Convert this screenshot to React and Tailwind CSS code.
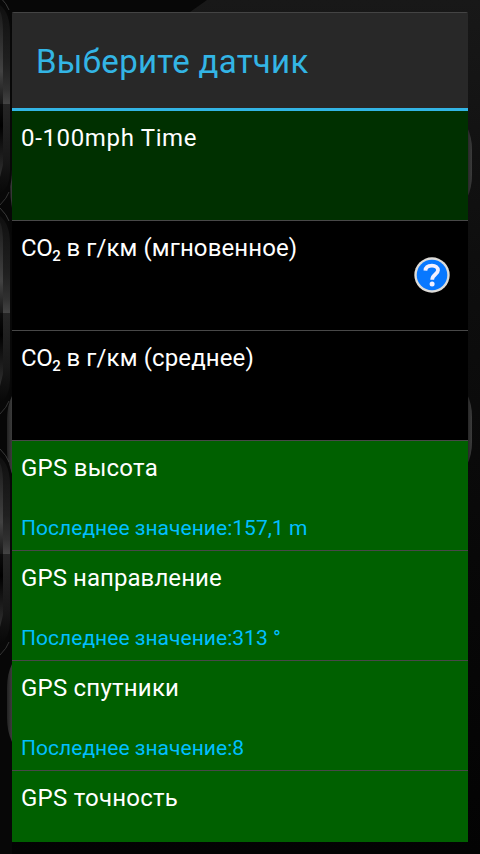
const sensors = [
  { name: "0-100mph Time", bg: "bg-[#003000]", tracking: "tracking-[0.65px]" },
  { co2: true, name: " в г/км (мгновенное)", bg: "bg-black", tracking: "tracking-[0.1px]", help: true },
  { co2: true, name: " в г/км (среднее)", bg: "bg-black", tracking: "tracking-[0.12px]" },
  { name: "GPS высота", bg: "bg-[#006000]", tracking: "tracking-[0.25px]", value: "157,1 m" },
  { name: "GPS направление", bg: "bg-[#006000]", tracking: "tracking-[0.07px]", value: "313 °" },
  { name: "GPS спутники", bg: "bg-[#006000]", tracking: "tracking-[0.22px]", value: "8" },
  { name: "GPS точность", bg: "bg-[#006000]", tracking: "tracking-[0.25px]" }
];

const HelpIcon = () => (
  <svg width="36" height="36" viewBox="0 0 36 36" className="-mt-0.5 shrink-0">
    <circle cx="18" cy="18" r="17.7" fill="#dedcd8" />
    <circle cx="18" cy="18" r="15.3" fill="#0878ff" />
    <path d="M11.4 13.6C11.6 10 14.4 8.6 18 8.6C21.6 8.6 24 10.6 24 13.3C24 17.3 18.2 17.4 18.2 22.8"
      fill="none" stroke="#f4f0ff" strokeWidth="3.8" />
    <circle cx="18.1" cy="27" r="2.5" fill="#f4f0ff" />
  </svg>
);

// edge of one gauge frame, poking out on the left
const LeftGauge = ({ top, split, bottom }) => (
  <g>
    <path d={`M0 ${top} Q12 ${top + 12} 12 ${top + 36} V${bottom - 36} Q12 ${bottom - 12} 0 ${bottom}Z`} fill="#080808" />
    <path d={`M0 ${top} Q7 ${top + 7} 9 ${top + 13}`} fill="none" stroke="#484848" strokeWidth="0.8" />
    <path d={`M0 ${bottom} Q7 ${bottom - 7} 9 ${bottom - 13}`} fill="none" stroke="#404040" strokeWidth="0.8" />
    <path d={`M0 ${top + 8} Q10 ${top + 16} 10 ${top + 36} V${split} H0Z`} fill="url(#shine)" />
    <path d={`M0 ${split} H10 V${bottom - 34} Q10 ${bottom - 18} 0 ${bottom - 10}Z`} fill="url(#shade)" />
    <path d={`M0 ${top + 14} Q3 ${top + 20} 3 ${top + 36} V${split} H0Z`} fill="url(#glass)" />
    <path d={`M0 ${split} H3 V${bottom - 40} L0 ${bottom - 28}Z`} fill="url(#glassLow)" />
  </g>
);

const Backdrop = () => (
  <svg className="absolute inset-0" width="480" height="854" viewBox="0 0 480 854">
    <defs>
      <linearGradient id="page" x1="0" y1="0" x2="0" y2="1">
        <stop offset="0" stopColor="#181818" />
        <stop offset="0.3" stopColor="#0e0e0e" />
        <stop offset="0.65" stopColor="#080808" />
        <stop offset="1" stopColor="#030303" />
      </linearGradient>
      <linearGradient id="shine" x1="0" y1="0" x2="0" y2="1">
        <stop offset="0" stopColor="#101010" />
        <stop offset="0.6" stopColor="#202020" />
        <stop offset="0.85" stopColor="#303030" />
        <stop offset="1" stopColor="#444" />
      </linearGradient>
      <linearGradient id="shade" x1="0" y1="0" x2="0" y2="1">
        <stop offset="0" stopColor="#252525" />
        <stop offset="0.6" stopColor="#181818" />
        <stop offset="1" stopColor="#070707" />
      </linearGradient>
      <linearGradient id="glass" x1="0" y1="0" x2="0" y2="1">
        <stop offset="0" stopColor="#1c1c1c" />
        <stop offset="0.65" stopColor="#424242" />
        <stop offset="1" stopColor="#171717" />
      </linearGradient>
      <linearGradient id="glassLow" x1="0" y1="0" x2="0" y2="1">
        <stop offset="0" stopColor="#0c0c0c" />
        <stop offset="0.3" stopColor="#000" />
        <stop offset="1" stopColor="#303030" />
      </linearGradient>
      <linearGradient id="tab">
        <stop offset="0" stopColor="#222" />
        <stop offset="0.6" stopColor="#323232" />
        <stop offset="1" stopColor="#3c3c3c" />
      </linearGradient>
    </defs>
    <rect width="480" height="854" fill="url(#page)" />
    <path d="M0 0H207L190 12H0Z" fill="#070707" />
    <path d="M0 12H12V854H0Z" fill="#070707" />
    <path d="M12 132Q10 138 10 150V185Q10 197 12 208Z" fill="url(#tab)" />
    <path d="M12 396Q7 406 7 420V450Q7 463 12 474Z" fill="url(#tab)" />
    <path d="M12 664Q7 674 7 688V718Q7 731 12 742Z" fill="url(#tab)" />
    <path d="M467 127Q472 137 472 150V175Q472 188 467 198Z" fill="url(#tab)" />
    <path d="M467 394Q472 404 472 417V442Q472 455 467 465Z" fill="url(#tab)" />
    <LeftGauge top={-3} split={104} bottom={205} />
    <LeftGauge top={208} split={313} bottom={414} />
    <LeftGauge top={449} split={554} bottom={655} />
  </svg>
);

const SensorItem = ({ sensor }) => (
  <li className={`flex h-[110px] shrink-0 items-center justify-between border-b border-[#484848] pl-[9px] pr-[18px] ${sensor.bg}`}>
    <div className="flex h-full flex-col">
      <p className={`mt-[11px] h-8 whitespace-pre text-[24px] leading-8 text-white ${sensor.tracking}`}>
        {sensor.co2 && (
          <>
            <span className="tracking-[-0.4px]">CO</span>
            <span className="relative top-[5px] text-[15px] font-medium leading-none tracking-[-0.5px]">2</span>
          </>
        )}
        {sensor.name}
      </p>
      {sensor.value && (
        <p className="mt-[30px] text-[21px] leading-7 tracking-[0.03px] text-[#00bfff]">
          Последнее значение:{sensor.value}
        </p>
      )}
    </div>
    {sensor.help && <HelpIcon />}
  </li>
);

const App = () => {
  return (
    <div className="relative h-[854px] w-[480px] overflow-hidden bg-black p-3 font-['Roboto',sans-serif]">
      <Backdrop />
      <div className="relative flex h-[830px] w-[456px] flex-col overflow-hidden rounded-t-[2px] bg-[#282828]">
        <h1 className="h-24 shrink-0 border-t border-[#444] pl-6 text-[33px] leading-[98px] tracking-[0.3px] text-[#33b5e5]">
          Выберите датчик
        </h1>
        <div className="h-[3px] shrink-0 bg-[#33b5e5]"></div>
        <ul className="flex min-h-0 grow flex-col overflow-hidden">
          {sensors.map((sensor) => (
            <SensorItem key={sensor.name} sensor={sensor} />
          ))}
        </ul>
      </div>
    </div>
  );
};

export default App;
